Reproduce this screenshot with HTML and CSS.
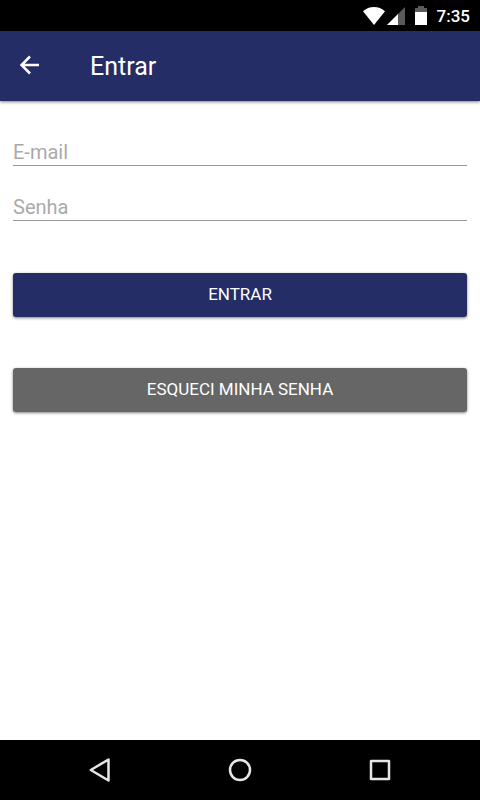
FILE: index.html
```html
<!DOCTYPE html>
<html lang="pt-BR">
  <head>
    <meta charset="utf-8">
    <meta name="viewport" content="width=device-width, initial-scale=1">
    <title>Entrar</title>
    <link rel="stylesheet" href="styles.css">
  </head>

  <body>
    <div class="status-bar">
      <svg class="status-wifi" width="22" height="18" viewBox="0 0 22 18" aria-hidden="true">
        <path d="M0 4.2C3 1.5 6.800 0 11 0s8 1.500 11 4.200L11 18z" />
      </svg>
      <svg class="status-signal" width="18" height="18" viewBox="0 0 18 18" aria-hidden="true">
        <path class="dim" d="M18 0v18H0z" />
        <path d="M11 7v11H0z" />
      </svg>
      <svg class="status-battery" width="12" height="19" viewBox="0 0 12 19" aria-hidden="true">
        <path class="dim" d="M3 0h6v2h3v5H0V2h3z" />
        <path d="M0 6h12v13H0z" />
      </svg>
      <span class="status-time">7:35</span>
    </div>

    <header class="toolbar">
      <button type="button" class="back-button" aria-label="Voltar">
        <svg width="20" height="20" viewBox="0 0 20 20" aria-hidden="true">
          <path d="M19 10H2M10 1.500L1.500 10l8.500 8.500" />
        </svg>
      </button>
      <h1>Entrar</h1>
    </header>

    <main>
      <form id="loginForm">
        <input class="field" type="email" id="email" placeholder="E-mail" aria-label="E-mail" />
        <input class="field" type="password" id="senha" placeholder="Senha" aria-label="Senha" />
        <button type="submit" class="button button-primary">Entrar</button>
        <button type="button" class="button button-dark">Esqueci minha senha</button>
      </form>
    </main>

    <nav class="nav-bar">
      <button type="button" aria-label="Voltar">
        <svg width="24" height="24" viewBox="0 0 24 24" aria-hidden="true">
          <path d="M20.500 1.500v21L2.800 12z" />
        </svg>
      </button>
      <button type="button" aria-label="Início">
        <svg width="24" height="24" viewBox="0 0 24 24" aria-hidden="true">
          <circle cx="12" cy="12" r="10" />
        </svg>
      </button>
      <button type="button" aria-label="Recentes">
        <svg width="24" height="24" viewBox="0 0 24 24" aria-hidden="true">
          <rect x="3" y="3" width="18" height="18" />
        </svg>
      </button>
    </nav>
  </body>
</html>
```

FILE: styles.css
```css
:root {
  --color-primary: #242d65;
  --color-dark: #666;
  --color-line: #999;
  --shadow: 0 1px 3px rgba(0, 0, 0, 0.5);
}

* {
  box-sizing: border-box;
}

body {
  margin: 0;
  min-height: 100vh;
  display: flex;
  flex-direction: column;
  background-color: #fff;
  font-family: Roboto, "Liberation Sans", sans-serif;
}

button {
  border: 0;
  font-family: inherit;
}

.status-bar {
  display: flex;
  align-items: center;
  justify-content: flex-end;
  height: 31px;
  padding: 0 10px;
  background-color: #000;
  color: #fff;
}
.status-bar svg {
  fill: #fff;
}
.status-bar .dim {
  fill: #5a5a5a;
}
.status-signal {
  margin-left: 2px;
}
.status-battery {
  margin-left: 10px;
}
.status-time {
  margin-left: 10px;
  font-size: 17px;
  font-weight: 500;
}

.toolbar {
  display: flex;
  align-items: center;
  height: 70px;
  background-color: var(--color-primary);
  box-shadow: var(--shadow);
  color: #fff;
}
.toolbar h1 {
  margin: 0 0 0 30px;
  font-size: 25px;
  font-weight: 400;
}

.back-button {
  display: flex;
  align-items: center;
  width: 60px;
  height: 60px;
  padding: 0 0 2px 20px;
  background: none;
}
.back-button svg {
  fill: none;
  stroke: #fff;
  stroke-width: 2.5;
}

main {
  flex: 1;
  padding: 10px 13px;
}

#loginForm {
  display: flex;
  flex-direction: column;
}

.field {
  width: 100%;
  height: 55px;
  padding: 28px 0 0;
  border: 0;
  border-bottom: 1px solid var(--color-line);
  border-radius: 0;
  outline: 0;
  background: none;
  font-family: inherit;
  font-size: 20px;
}
.field::placeholder {
  color: #aaa;
}

.button {
  height: 44px;
  margin-top: 51px;
  padding: 0 0 2px;
  border-radius: 3px;
  box-shadow: var(--shadow);
  color: #fff;
  font-size: 17px;
  text-transform: uppercase;
}
.button-primary {
  margin-top: 52px;
  background-color: var(--color-primary);
}
.button-dark {
  background-color: var(--color-dark);
}

.nav-bar {
  display: flex;
  height: 60px;
  padding: 0 30px;
  background-color: #000;
}
.nav-bar button {
  flex: 1;
  display: flex;
  align-items: center;
  justify-content: center;
  background: none;
}
.nav-bar svg {
  fill: none;
  stroke: #e6e6e6;
  stroke-width: 2.5;
  stroke-linejoin: round;
}
```
